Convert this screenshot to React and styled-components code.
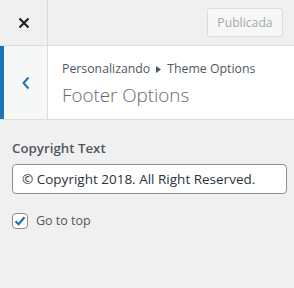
import styled, { createGlobalStyle } from "styled-components";

const GlobalStyle = createGlobalStyle`
    body {
        margin: 0;
        background: #f0f0f1;
        font-family: "Open Sans", "Noto Sans", sans-serif;
        color: #3c434a;
    }
`;

const Panel = styled.div`
    width: 294px;
    height: 288px;
    background: #f0f0f1;
`;

const Header = styled.div`
    display: flex;
    align-items: center;
    height: 45px;
    border-bottom: 1px solid #dcdcde;
`;

const CloseButton = styled.div`
    width: 47px;
    height: 45px;
    border-right: 1px solid #dcdcde;
    display: flex;
    align-items: center;
    justify-content: center;
`;

const HeaderActions = styled.div`
    flex: 1;
    display: flex;
    justify-content: flex-end;
    padding-right: 11px;
`;

const PublishButton = styled.button`
    height: 29px;
    width: 76px;
    padding: 0;
    border: 1px solid #dcdcde;
    border-radius: 3px;
    background: #f6f7f7;
    color: #a7aaad;
    font-family: inherit;
    font-size: 12.2px;
`;

const SectionTitle = styled.div`
    display: flex;
    height: 73px;
    background: #fff;
    border-bottom: 1px solid #dcdcde;
`;

const BackButton = styled.div`
    width: 43px;
    border-left: 4px solid #2271b1;
    border-right: 1px solid #dcdcde;
    background: #f6f7f7;
    display: flex;
    align-items: center;
    justify-content: center;
`;

const TitleText = styled.div`
    padding: 14px 0 0 14px;
`;

const Crumb = styled.div`
    font-size: 12.3px;
    line-height: 18px;
    color: #50575e;
    display: flex;
    align-items: center;
    gap: 6px;
`;

const Heading = styled.h3`
    margin: 4px 0 0;
    font-size: 18.8px;
    font-weight: 300;
    line-height: 26px;
    color: #646970;
`;

const Content = styled.div`
    padding: 18px 7px 0 12px;
`;

const Label = styled.div`
    font-size: 13.3px;
    font-weight: 600;
    line-height: 20px;
    color: #50575e;
    margin-bottom: 6px;
`;

const TextInput = styled.input`
    box-sizing: border-box;
    width: 275px;
    height: 30px;
    padding: 0 9px;
    border: 1px solid #8c8f94;
    border-radius: 4px;
    background: #fff;
    color: #2c3338;
    font-family: inherit;
    font-size: 13.5px;
    outline: none;
`;

const CheckRow = styled.label`
    display: flex;
    align-items: center;
    gap: 8px;
    margin-top: 18px;
    font-size: 12.5px;
    color: #50575e;
`;

const CheckBox = styled.span`
    box-sizing: border-box;
    width: 16px;
    height: 16px;
    border: 1px solid #8c8f94;
    border-radius: 4px;
    background: #fff;
    display: flex;
    align-items: center;
    justify-content: center;
`;

function App() {
    return (
        <>
            <GlobalStyle />
            <Panel>
                <Header>
                    <CloseButton>
                        <svg width="12" height="12" viewBox="0 0 12 12">
                            <path d="M1.5 1.5 L10.5 10.5 M10.5 1.5 L1.5 10.5" stroke="#1d2327" strokeWidth="2.2" />
                        </svg>
                    </CloseButton>
                    <HeaderActions>
                        <PublishButton disabled>Publicada</PublishButton>
                    </HeaderActions>
                </Header>
                <SectionTitle>
                    <BackButton>
                        <svg width="10" height="14" viewBox="0 0 10 14">
                            <path d="M7.5 1.5 L2.5 7 L7.5 12.5" stroke="#2271b1" strokeWidth="2" fill="none" />
                        </svg>
                    </BackButton>
                    <TitleText>
                        <Crumb>
                            Personalizando
                            <svg width="5" height="7" viewBox="0 0 5 7">
                                <path d="M0 0 L5 3.5 L0 7 Z" fill="#50575e" />
                            </svg>
                            Theme Options
                        </Crumb>
                        <Heading>Footer Options</Heading>
                    </TitleText>
                </SectionTitle>
                <Content>
                    <Label>Copyright Text</Label>
                    <TextInput defaultValue="© Copyright 2018. All Right Reserved." />
                    <CheckRow>
                        <CheckBox>
                            <svg width="14" height="14" viewBox="0 0 14 14">
                                <path d="M2.5 7.2 L5.6 10.2 L11.5 3.2" stroke="#2271b1" strokeWidth="2.2" fill="none" />
                            </svg>
                        </CheckBox>
                        Go to top
                    </CheckRow>
                </Content>
            </Panel>
        </>
    );
}

export default App;
